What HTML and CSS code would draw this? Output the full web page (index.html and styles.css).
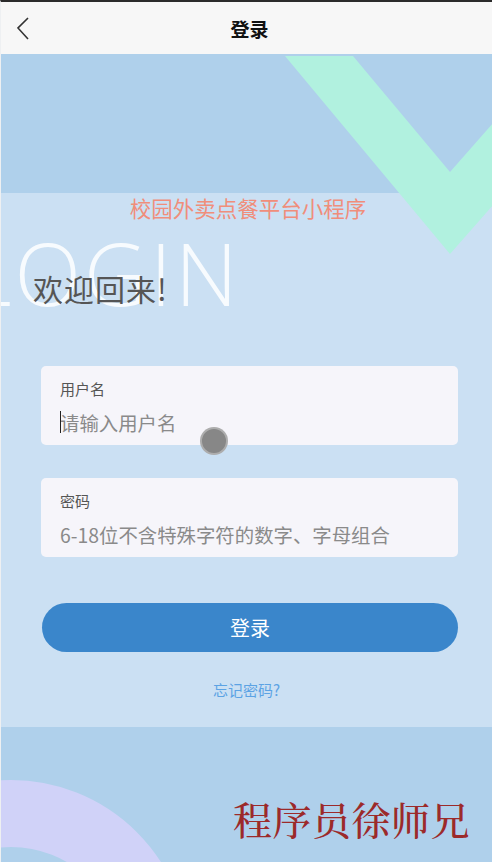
FILE: index.html
```html
<!DOCTYPE html>
<html lang="zh-CN">
<head>
    <meta charset="UTF-8">
    <meta name="viewport" content="width=device-width, initial-scale=1.0">
    <title>登录</title>
    <link rel="stylesheet" href="styles.css">
</head>
<body>

<div class="page">
    <div class="nav-bar">
        <span class="nav-back">
            <svg width="20" height="26" viewBox="0 0 20 26">
                <polyline points="11,3 1,13 11,24" fill="none" stroke="#333" stroke-width="1.6" stroke-linejoin="miter"/>
            </svg>
        </span>
        <h1 class="nav-title">登录</h1>
    </div>

    <div class="hero"></div>

    <!-- decorazione a V -->
    <svg class="deco-v" width="492" height="260" viewBox="0 0 492 260">
        <polygon points="284,0 352,0 449,116 492,67 492,149 449,198" fill="#b1f1df"/>
    </svg>

    <div class="panel">
        <div class="login-bg">LOGIN</div>
        <p class="subtitle">校园外卖点餐平台小程序</p>
        <h2 class="welcome">欢迎回来!</h2>

        <div class="field">
            <label for="username">用户名</label>
            <div class="field-input">
                <span class="caret"></span>
                <input type="text" id="username" placeholder="请输入用户名">
            </div>
        </div>

        <div class="field">
            <label for="password">密码</label>
            <div class="field-input">
                <input type="password" id="password" placeholder="6-18位不含特殊字符的数字、字母组合">
            </div>
        </div>

        <button class="btn-login">登录</button>
        <a class="forgot" href="#">忘记密码?</a>
    </div>

    <div class="footer">
        <div class="ring"></div>
        <span class="watermark">程序员徐师兄</span>
    </div>

    <span class="touch-dot"></span>
</div>

</body>
</html>
```

FILE: styles.css
```css
body {
    margin: 0;
    font-family: "Noto Sans CJK SC", "Noto Sans", sans-serif;
    background: #2b2b2b;
}

.page {
    position: relative;
    width: 492px;
    height: 862px;
    box-sizing: border-box;
    border-top: 2px solid #2b2b2b;
    border-left: 1px solid #eef0f2;
    overflow: hidden;
    background: #cbe0f3;
}

.nav-bar {
    position: relative;
    height: 52px;
    background: #f7f7f7;
    display: flex;
    align-items: center;
    justify-content: center;
}

.nav-back {
    position: absolute;
    left: 16px;
    top: 13px;
}

.nav-title {
    margin: 0;
    font-size: 19px;
    font-weight: bold;
    color: #111;
    padding-left: 6px;
}

.hero {
    height: 139px;
    background: #afd0eb;
}

.deco-v {
    position: absolute;
    left: 0;
    top: 54px;
}

.panel {
    position: relative;
    height: 534px;
    padding-top: 1px;
    box-sizing: border-box;
}

.login-bg {
    position: absolute;
    left: -34px;
    top: 36px;
    font-family: "Open Sans", sans-serif;
    font-size: 87px;
    font-weight: 300;
    line-height: 87px;
    color: rgba(255, 255, 255, 0.85);
    letter-spacing: 3px;
}

.subtitle {
    position: relative;
    margin: 0;
    text-align: center;
    font-size: 21.5px;
    line-height: 28px;
    color: #f08e7b;
    padding-left: 3px;
}

.welcome {
    position: relative;
    margin: 46px 0 0 32px;
    font-size: 30px;
    line-height: 40px;
    font-weight: normal;
    color: #555;
    letter-spacing: 1px;
}

.field {
    position: relative;
    margin: 58px 34px 0 40px;
    height: 79px;
    box-sizing: border-box;
    padding: 13px 19px 0;
    background: #f6f5fa;
    border-radius: 5px;
}

.field + .field {
    margin-top: 33px;
}

.field label {
    display: block;
    font-size: 15px;
    line-height: 20px;
    color: #555;
}

.field-input {
    position: relative;
    margin-top: 10px;
}

.field input {
    display: block;
    width: 100%;
    height: 26px;
    padding: 0;
    border: none;
    outline: none;
    background: transparent;
    font-family: "Noto Sans CJK SC", "Noto Sans", sans-serif;
    font-size: 19.4px;
}

.field input::placeholder {
    color: #8a8a8a;
}

.caret {
    position: absolute;
    left: 0;
    top: 2px;
    width: 1px;
    height: 22px;
    background: #222;
}

.btn-login {
    display: block;
    margin: 46px 34px 0 41px;
    width: 416px;
    height: 49px;
    border: none;
    border-radius: 25px;
    background: #3a86cb;
    color: #fff;
    font-family: "Noto Sans CJK SC", "Noto Sans", sans-serif;
    font-size: 20px;
    cursor: pointer;
}

.forgot {
    display: block;
    margin-top: 27px;
    text-align: center;
    font-size: 15px;
    line-height: 22px;
    color: #5ca3e4;
    text-decoration: none;
}

.footer {
    position: relative;
    height: 135px;
    background: #afd0eb;
    display: flex;
    justify-content: flex-end;
    padding: 66px 22px 0 0;
    box-sizing: border-box;
}

.ring {
    position: absolute;
    left: -168px;
    top: 53px;
    width: 356px;
    height: 356px;
    box-sizing: border-box;
    border: 67px solid #d0d2f8;
    border-radius: 50%;
}

.watermark {
    position: relative;
    font-family: "Noto Serif CJK SC", "Noto Sans CJK SC", serif;
    font-size: 39px;
    line-height: 50px;
    font-weight: 500;
    color: #9c2a2a;
    letter-spacing: 0.5px;
}

.touch-dot {
    position: absolute;
    left: 199px;
    top: 425px;
    width: 28px;
    height: 28px;
    box-sizing: border-box;
    border-radius: 50%;
    background: #878787;
    border: 2px solid rgba(190, 190, 190, 0.7);
}
```
